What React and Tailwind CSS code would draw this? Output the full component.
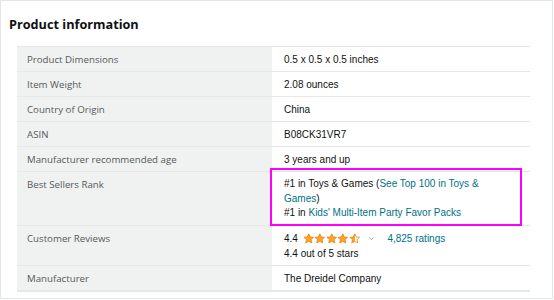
import { Fragment } from "react";

const rows = [
  { label: "Product Dimensions", value: "0.5 x 0.5 x 0.5 inches" },
  { label: "Item Weight", value: "2.08 ounces" },
  { label: "Country of Origin", value: "China" },
  { label: "ASIN", value: "B08CK31VR7" },
  { label: "Manufacturer recommended age", value: "3 years and up" },
  { label: "Best Sellers Rank", value: "rank" },
  { label: "Customer Reviews", value: "reviews" },
  { label: "Manufacturer", value: "The Dreidel Company" },
];

function Star({ half }) {
  return (
    <svg viewBox="0 0 24 24" className="h-[11.5px] w-[11.5px]" aria-hidden="true">
      <defs>
        <linearGradient id="halfStar">
          <stop offset="50%" stopColor="#ffa41c" />
          <stop offset="50%" stopColor="#ffffff" />
        </linearGradient>
      </defs>
      <path
        d="M12 1.8l3 6.4 7 .8-5.2 4.8 1.5 7L12 17.3l-6.3 3.5 1.5-7L2 9l7-.8z"
        fill={half ? "url(#halfStar)" : "#ffa41c"}
        stroke="#e47911"
        strokeWidth="1.5"
        strokeLinejoin="round"
      />
    </svg>
  );
}

function Value({ value }) {
  if (value === "rank") {
    return (
      <div className="leading-[14.67px]">
        <div>
          #1 in Toys &amp; Games (<span className="text-[#007185]">See Top 100 in Toys &amp;</span>
        </div>
        <div>
          <span className="text-[#007185]">Games</span>)
        </div>
        <div>
          #1 in <span className="text-[#007185]">Kids' Multi-Item Party Favor Packs</span>
        </div>
      </div>
    );
  }
  if (value === "reviews") {
    return (
      <div>
        <div className="flex h-[15px] items-center">
          <span>4.4</span>
          <span className="ml-[5px] flex">
            <Star />
            <Star />
            <Star />
            <Star />
            <Star half />
          </span>
          <svg viewBox="0 0 10 10" className="ml-[8px] h-[7px] w-[7px]" aria-hidden="true">
            <path d="M2 3.5l3 3 3-3" fill="none" stroke="#8d9096" strokeWidth="1.2" />
          </svg>
          <span className="ml-[12px] text-[#007185]">4,825 ratings</span>
        </div>
        <div>4.4 out of 5 stars</div>
      </div>
    );
  }
  return value;
}

export default function App() {
  return (
    <div className="h-[300px] w-[554px] bg-white">
      <div className="relative h-[299px] w-[553px] border border-[#e3e6e6] bg-white">
        <h2 className="px-[8px] pt-[13px] font-['Open_Sans',sans-serif] text-[12.7px] font-bold leading-[20px] text-[#0f1111]">
          Product information
        </h2>
        <div className="ml-[16px] mt-[12px] w-[513px] border-b-2 border-[#e7e7e7]">
          <div className="grid grid-cols-[255px_258px] border-t border-[#e7e7e7]">
            {rows.map((r, i) => (
              <Fragment key={r.label}>
                <div
                  className={`bg-[#f0f2f2] px-[10px] pt-[5px] pb-[4px] font-['Open_Sans',sans-serif] text-[9.7px] leading-[15px] text-[#565959] ${
                    i < rows.length - 1 ? "border-b border-[#e7e7e7]" : ""
                  }`}
                >
                  {r.label}
                </div>
                <div
                  className={`pl-[12px] pr-[24px] pt-[5px] pb-[4px] font-['Liberation_Sans',Arial,sans-serif] text-[10px] leading-[15px] text-[#0f1111] ${
                    i < rows.length - 1 ? "border-b border-[#e7e7e7]" : ""
                  }`}
                >
                  <Value value={r.value} />
                </div>
              </Fragment>
            ))}
          </div>
        </div>
        <div className="pointer-events-none absolute left-[269px] top-[167px] h-[58px] w-[252px] border-2 border-[#ff00ff]" />
      </div>
    </div>
  );
}
